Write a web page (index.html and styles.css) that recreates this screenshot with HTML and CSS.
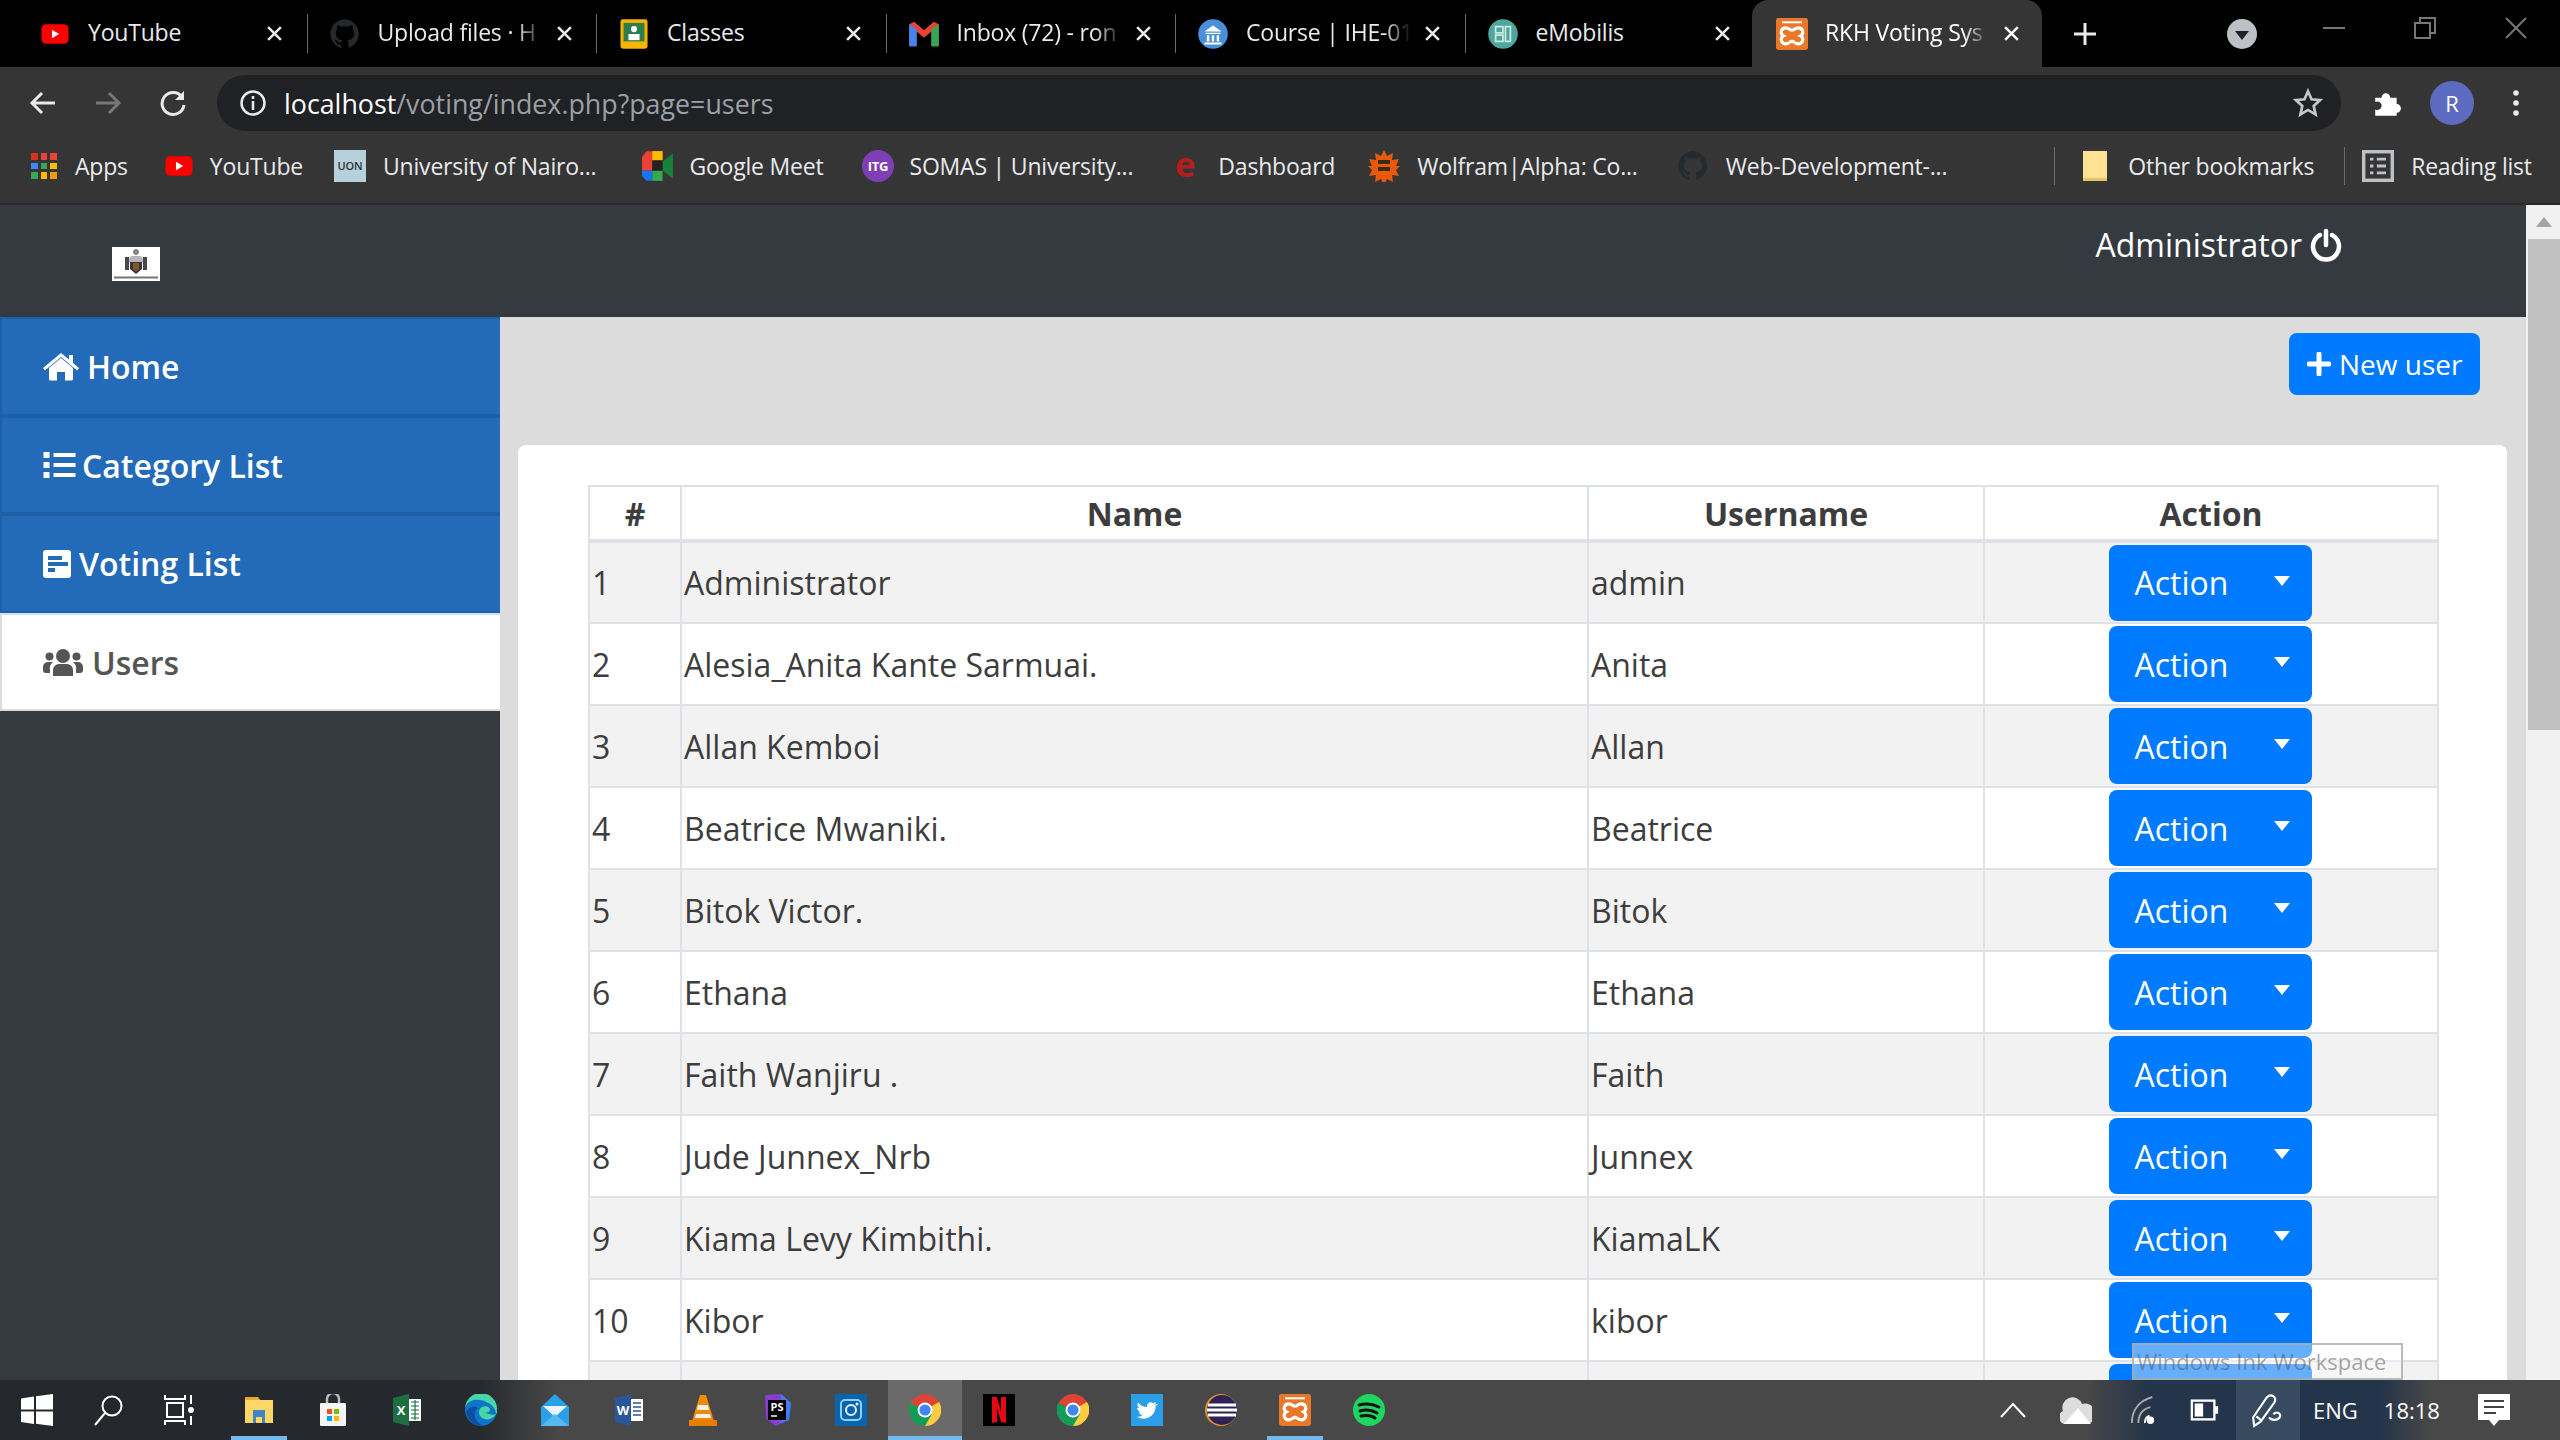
FILE: index.html
```html
<!DOCTYPE html>
<html lang="en">
<head>
  <meta charset="UTF-8">
  <meta name="viewport" content="width=device-width, initial-scale=1.0">
  <title>RKH Voting System</title>
  <link rel="stylesheet" href="styles.css">
</head>
<body>
  <svg class="defs" width="0" height="0">
    <symbol id="i-caret" viewBox="0 0 16 10"><path d="M0 0h16L8 10z" fill="currentColor"/></symbol>
    <symbol id="i-x" viewBox="0 0 16 16"><path d="M2 2l12 12M14 2L2 14" stroke="currentColor" stroke-width="2.4" fill="none"/></symbol>
    <symbol id="i-gh" viewBox="0 0 24 24"><path fill="#24292e" d="M12 1a11 11 0 0 0-3.5 21.4c.6.1.8-.2.8-.5v-2c-3 .7-3.700-1.400-3.700-1.400-.5-1.300-1.200-1.600-1.200-1.600-1-.7.100-.7.100-.7 1.100.1 1.700 1.100 1.700 1.100 1 1.700 2.600 1.200 3.200.9.100-.7.400-1.200.7-1.500-2.400-.3-5-1.200-5-5.400 0-1.200.4-2.200 1.100-2.900-.1-.3-.5-1.400.1-2.900 0 0 .9-.3 3 1.100a10 10 0 0 1 5.400 0c2.100-1.400 3-1.100 3-1.100.6 1.500.2 2.600.1 2.900.7.800 1.100 1.700 1.100 2.900 0 4.200-2.600 5.100-5 5.400.4.300.7 1 .7 2v3c0 .3.200.6.800.5A11 11 0 0 0 12 1z"/></symbol>
    <symbol id="i-yt" viewBox="0 0 26 26"><rect x="2" y="5" width="22" height="16" rx="4" fill="#f00"/><path d="M10.500 9.500l6 3.500-6 3.500z" fill="#fff"/></symbol>
    <symbol id="i-xampp" viewBox="0 0 26 26"><rect width="26" height="26" rx="2" fill="#e8792b"/><path d="M5 3.500h16" stroke="#fff" stroke-width="1.600"/><path d="M8 8c3 0 3 2 5 2s2-2 5-2c4 0 5 5 2 6.500 3 1.500 2 6.500-2 6.500-3 0-3-2-5-2s-2 2-5 2c-4 0-5-5-2-6.500C3 13 4 8 8 8z" fill="none" stroke="#fff" stroke-width="2.500"/></symbol>
    <symbol id="i-chrome" viewBox="0 0 32 32"><circle cx="16" cy="16" r="16" fill="#db4437"/><path d="M16 16L2 24a16 16 0 0 1-1-15z" fill="#0f9d58"/><path d="M16 16l14-8a16 16 0 0 1-14 24z" fill="#ffcd40"/><path d="M2 24a16 16 0 0 0 14 8l7-12-7-4z" fill="#0f9d58"/><circle cx="16" cy="16" r="7.500" fill="#fff"/><circle cx="16" cy="16" r="5.600" fill="#4285f4"/></symbol>
  </svg>

  <div class="tabstrip">
    <div class="tab">
      <svg class="fav"><use href="#i-yt"/></svg><span class="tab-title">YouTube</span><svg class="tab-x"><use href="#i-x"/></svg>
    </div>
    <div class="tab">
      <svg class="fav"><use href="#i-gh"/></svg><span class="tab-title fade">Upload files · H</span><svg class="tab-x"><use href="#i-x"/></svg>
    </div>
    <div class="tab">
      <svg class="fav" viewBox="0 0 26 26"><rect x="2" y="1" width="22" height="24" rx="2" fill="#f4b400"/><rect x="4.500" y="4" width="17" height="15" fill="#2e7d4f"/><circle cx="13" cy="9" r="2.500" fill="#fff"/><rect x="8.500" y="13" width="9" height="5" fill="#fff"/></svg><span class="tab-title">Classes</span><svg class="tab-x"><use href="#i-x"/></svg>
    </div>
    <div class="tab">
      <svg class="fav" viewBox="0 0 26 26"><path d="M1 23V5l4-2 8 7 8-7 4 2v18h-6V11l-6 5-6-5v12z" fill="#ea4335"/><path d="M1 23V5l6 4v14z" fill="#4285f4"/><path d="M25 23V5l-6 4v14z" fill="#34a853"/></svg><span class="tab-title fade">Inbox (72) - ron</span><svg class="tab-x"><use href="#i-x"/></svg>
    </div>
    <div class="tab">
      <svg class="fav" viewBox="0 0 26 26"><circle cx="13" cy="13" r="12" fill="#4a90d9"/><path d="M6 11l7-5 7 5zM7 12h12v1H7zM8 14h2v5H8zM12 14h2v5h-2zM16 14h2v5h-2zM6 20h14v1.500H6z" fill="#fff"/></svg><span class="tab-title fade">Course | IHE-01</span><svg class="tab-x"><use href="#i-x"/></svg>
    </div>
    <div class="tab">
      <svg class="fav" viewBox="0 0 26 26"><circle cx="13" cy="13" r="12" fill="#4ea79c"/><path d="M7 7h6v5H7zM15 7h4v12h-4zM7 14h6v5H7z" fill="none" stroke="#cfe9e4" stroke-width="1.400"/></svg><span class="tab-title">eMobilis</span><svg class="tab-x"><use href="#i-x"/></svg>
    </div>
    <div class="tab active">
      <svg class="fav"><use href="#i-xampp"/></svg><span class="tab-title fade">RKH Voting Sys</span><svg class="tab-x"><use href="#i-x"/></svg>
    </div>
    <svg class="new-tab" viewBox="0 0 24 24"><path d="M12 1v22M1 12h22" stroke="#e8eaed" stroke-width="3"/></svg>
    <svg class="tab-search" viewBox="0 0 30 30"><circle cx="15" cy="15" r="15" fill="#bdc1c6"/><path d="M8 12h14l-7 9z" fill="#202124"/></svg>
    <div class="win-btns">
      <svg viewBox="0 0 22 22"><path d="M0 11h22" stroke="#777" stroke-width="2"/></svg>
      <svg viewBox="0 0 22 22"><path d="M1 6h15v15H1zM6 6V1h15v15h-5" stroke="#777" stroke-width="2" fill="none"/></svg>
      <svg viewBox="0 0 22 22"><path d="M1 1l20 20M21 1L1 21" stroke="#777" stroke-width="2"/></svg>
    </div>
  </div>

  <div class="toolbar">
    <svg class="nav-ic" viewBox="0 0 28 28"><path d="M26 14H4M13 4L3 14l10 10" stroke="#e8eaed" stroke-width="3" fill="none"/></svg>
    <svg class="nav-ic" viewBox="0 0 28 28"><path d="M2 14h22M15 4l10 10-10 10" stroke="#777" stroke-width="3" fill="none"/></svg>
    <svg class="nav-ic" viewBox="0 0 28 28"><path d="M23 8a11 11 0 1 0 2 8" stroke="#e8eaed" stroke-width="3" fill="none"/><path d="M25 2v9h-9z" fill="#e8eaed"/></svg>
    <div class="omnibox">
      <svg class="info-ic" viewBox="0 0 28 28"><circle cx="14" cy="14" r="11.500" fill="none" stroke="#e8eaed" stroke-width="2.500"/><path d="M14 12v9M14 7v3" stroke="#e8eaed" stroke-width="2.500"/></svg>
      <span class="url"><b>localhost</b>/voting/index.php?page=users</span>
      <svg class="star-ic" viewBox="0 0 28 28"><path d="M14 3l3.300 7.500 8 .8-6 5.400 1.800 8L14 20.500 6.900 24.700l1.800-8-6-5.400 8-.8z" fill="none" stroke="#c4c7c5" stroke-width="2.500"/></svg>
    </div>
    <svg class="puzzle-ic" viewBox="0 0 28 28"><path d="M3 9h6a4 4 0 1 1 8 0h6v6a4 4 0 1 1 0 8v3H3v-6a4 4 0 1 0 0-7z" fill="#fff"/></svg>
    <span class="avatar">R</span>
    <svg class="menu-ic" viewBox="0 0 8 28"><circle cx="4" cy="4" r="2.800" fill="#e8eaed"/><circle cx="4" cy="14" r="2.800" fill="#e8eaed"/><circle cx="4" cy="24" r="2.800" fill="#e8eaed"/></svg>
  </div>

  <div class="bookmarks">
    <a class="bm bm-apps"><svg viewBox="0 0 26 26"><path d="M0 0h7v7H0z" fill="#d93025"/><path d="M10 0h6v7h-6zM19 0h7v7h-7z" fill="#ea4335"/><path d="M0 10h7v6H0z" fill="#4285f4"/><path d="M10 10h6v6h-6z" fill="#34a853"/><path d="M19 10h7v6h-7z" fill="#fbbc04"/><path d="M0 19h7v7H0z" fill="#34a853"/><path d="M10 19h6v7h-6z" fill="#fbbc04"/><path d="M19 19h7v7h-7z" fill="#f29900"/></svg>Apps</a>
    <a class="bm bm-yt"><svg><use href="#i-yt"/></svg>YouTube</a>
    <a class="bm bm-uon"><svg viewBox="0 0 32 32"><rect width="32" height="32" fill="#b6d0dc"/><text x="16" y="20" text-anchor="middle" class="uon-txt">UON</text></svg>University of Nairo...</a>
    <a class="bm bm-meet"><svg viewBox="0 0 28 28"><path d="M4 1h14v9H9v8H0V6z" fill="#ea4335"/><path d="M0 18h9v9H4l-4-4z" fill="#1a73e8"/><path d="M9 18h9v9H9z" fill="#34a853"/><path d="M18 1v8h-9V1z" fill="#fbbc04"/><path d="M18 10l9-7v22l-9-7z" fill="#188038"/><path d="M9 9h9v9H9z" fill="#222"/></svg>Google Meet</a>
    <a class="bm bm-itg"><svg viewBox="0 0 32 32"><circle cx="16" cy="16" r="16" fill="#7e3fb5"/><text x="16" y="21" text-anchor="middle" class="itg-txt">ITG</text></svg>SOMAS | University...</a>
    <a class="bm bm-e"><svg viewBox="0 0 28 28"><text x="14" y="24" text-anchor="middle" class="e-txt">e</text></svg>Dashboard</a>
    <a class="bm bm-wolf"><svg viewBox="0 0 32 32"><path d="M16 0l3 6 6-3-1 7 7-1-3 7 4 0-4 4 3 6-7-1 1 7-6-3-3 6-3-6-6 3 1-7-7 1 3-6-4-4 4 0-3-7 7 1-1-7 6 3z" fill="#e8590c"/><path d="M10 10h12v4H10zM10 17h12v4H10z" fill="#3a2a10"/></svg>Wolfram|Alpha: Co...</a>
    <a class="bm bm-gh"><svg><use href="#i-gh"/></svg>Web-Development-...</a>
    <span class="bm-sep sep-1"></span>
    <a class="bm bm-other"><svg viewBox="0 0 26 32"><path d="M1 1h24v30H1z" fill="#fde293"/><path d="M1 28h24v3H1z" fill="#e3c565"/></svg>Other bookmarks</a>
    <span class="bm-sep sep-2"></span>
    <a class="bm bm-read"><svg viewBox="0 0 28 28"><rect x="1.500" y="1.500" width="25" height="25" fill="none" stroke="#bdc1c6" stroke-width="3"/><path d="M7 8h3M13 8h8M7 14h3M13 14h8M7 20h3M13 20h8" stroke="#bdc1c6" stroke-width="2.500"/></svg>Reading list</a>
  </div>

  <div class="page">
    <aside class="sidebar">
      <div class="brand">
        <svg class="logo" viewBox="0 0 48 34">
          <rect width="48" height="34" fill="#fff"/>
          <circle cx="24" cy="5" r="3" fill="#8b8790"/>
          <path d="M19 9h10l2 3v3H17v-3z" fill="#b9b6bb"/>
          <path d="M13 10h4v13h-4zM31 10h4v13h-4z" fill="#4a4650"/>
          <path d="M18 15h12v7l-6 5-6-5z" fill="#3b3340"/>
          <path d="M21 16h6v6l-3 3-3-3z" fill="#7a5a28"/>
          <path d="M2 29.500h44v2H2z" fill="#77747a"/>
        </svg>
      </div>
      <nav class="menu">
        <a class="menu-item">
          <svg class="menu-ic-svg ic-home" viewBox="0 0 36 28"><path d="M18 5L6 15v11a1.500 1.500 0 0 0 1.500 1.500H14V19h8v8.500h6.500A1.500 1.500 0 0 0 30 26V15z" fill="currentColor"/><path d="M18 0L0 15l2 2.400L18 4l16 13.400 2-2.400-6-5V2h-4v4.600z" fill="currentColor"/></svg>Home</a>
        <a class="menu-item">
          <svg class="menu-ic-svg ic-list" viewBox="0 0 32 28"><path d="M0 1h6v6H0zM0 11h6v6H0zM0 21h6v6H0zM10 2h22v4H10zM10 12h22v4H10zM10 22h22v4H10z" fill="currentColor"/></svg>Category List</a>
        <a class="menu-item">
          <svg class="menu-ic-svg ic-poll" viewBox="0 0 28 28"><path fill-rule="evenodd" d="M3 0h22a3 3 0 0 1 3 3v22a3 3 0 0 1-3 3H3a3 3 0 0 1-3-3V3a3 3 0 0 1 3-3zM5 6v4h14V6zM5 12v4h20v-4h-20zM5 18v4h7v-4z" fill="currentColor"/></svg>Voting List</a>
        <a class="menu-item current">
          <svg class="menu-ic-svg ic-users" viewBox="0 0 40 28"><circle cx="20" cy="8" r="7" fill="currentColor"/><circle cx="6.500" cy="8.500" r="4" fill="currentColor"/><circle cx="33.500" cy="8.500" r="4" fill="currentColor"/><path d="M10 28v-6a6 6 0 0 1 6-6h8a6 6 0 0 1 6 6v6zM0 22v-3a5 5 0 0 1 5-5h5a8 8 0 0 0-3 8v3H3a3 3 0 0 1-3-3zM40 22v-3a5 5 0 0 0-5-5h-5a8 8 0 0 1 3 8v3h4a3 3 0 0 0 3-3z" fill="currentColor"/></svg>Users</a>
      </nav>
    </aside>

    <div class="body-col">
      <header class="topbar">
        <span class="admin">Administrator
          <svg class="power-ic" viewBox="0 0 32 32"><path d="M10 6a13 13 0 1 0 12 0" fill="none" stroke="currentColor" stroke-width="4.500" stroke-linecap="round"/><path d="M16 2v14" stroke="currentColor" stroke-width="4.500" stroke-linecap="round"/></svg>
        </span>
      </header>
      <main class="content">
        <div class="actions-row">
          <button class="btn btn-new"><svg class="plus-ic" viewBox="0 0 24 24"><path d="M12 2v20M2 12h20" stroke="currentColor" stroke-width="5" stroke-linecap="round"/></svg>New user</button>
        </div>
        <section class="card">
          <table class="users">
            <colgroup><col class="c-num"><col class="c-name"><col class="c-user"><col class="c-act"></colgroup>
            <thead>
              <tr><th>#</th><th>Name</th><th>Username</th><th>Action</th></tr>
            </thead>
            <tbody>
              <tr><td>1</td><td>Administrator</td><td>admin</td><td class="act"><button class="btn btn-act">Action<svg class="caret"><use href="#i-caret"/></svg></button></td></tr>
              <tr><td>2</td><td>Alesia_Anita Kante Sarmuai.</td><td>Anita</td><td class="act"><button class="btn btn-act">Action<svg class="caret"><use href="#i-caret"/></svg></button></td></tr>
              <tr><td>3</td><td>Allan Kemboi</td><td>Allan</td><td class="act"><button class="btn btn-act">Action<svg class="caret"><use href="#i-caret"/></svg></button></td></tr>
              <tr><td>4</td><td>Beatrice Mwaniki.</td><td>Beatrice</td><td class="act"><button class="btn btn-act">Action<svg class="caret"><use href="#i-caret"/></svg></button></td></tr>
              <tr><td>5</td><td>Bitok Victor.</td><td>Bitok</td><td class="act"><button class="btn btn-act">Action<svg class="caret"><use href="#i-caret"/></svg></button></td></tr>
              <tr><td>6</td><td>Ethana</td><td>Ethana</td><td class="act"><button class="btn btn-act">Action<svg class="caret"><use href="#i-caret"/></svg></button></td></tr>
              <tr><td>7</td><td>Faith Wanjiru .</td><td>Faith</td><td class="act"><button class="btn btn-act">Action<svg class="caret"><use href="#i-caret"/></svg></button></td></tr>
              <tr><td>8</td><td>Jude Junnex_Nrb</td><td>Junnex</td><td class="act"><button class="btn btn-act">Action<svg class="caret"><use href="#i-caret"/></svg></button></td></tr>
              <tr><td>9</td><td>Kiama Levy Kimbithi.</td><td>KiamaLK</td><td class="act"><button class="btn btn-act">Action<svg class="caret"><use href="#i-caret"/></svg></button></td></tr>
              <tr><td>10</td><td>Kibor</td><td>kibor</td><td class="act"><button class="btn btn-act">Action<svg class="caret"><use href="#i-caret"/></svg></button></td></tr>
              <tr><td></td><td></td><td></td><td class="act"><button class="btn btn-act">Action<svg class="caret"><use href="#i-caret"/></svg></button></td></tr>
            </tbody>
          </table>
        </section>
      </main>
    </div>

    <div class="scrollbar">
      <div class="scroll-up"><svg viewBox="0 0 16 10"><path d="M8 0l8 10H0z" fill="#a3a3a3"/></svg></div>
      <div class="scroll-thumb"></div>
    </div>
    <div class="ink-tip">Windows Ink Workspace</div>
  </div>

  <footer class="taskbar">
    <div class="task-cell"><svg viewBox="0 0 32 32"><path d="M0 4.500l13-2v13H0zM15 2.200L32 0v15.500H15zM0 17.500h13v12.500l-13-2zM15 17.500h17V32l-17-2.300z" fill="#fff"/></svg></div>
    <div class="task-cell"><svg viewBox="0 0 32 32"><circle cx="20" cy="12" r="9.500" fill="none" stroke="#fff" stroke-width="2"/><path d="M13 19L3 31" stroke="#fff" stroke-width="2"/></svg></div>
    <div class="task-cell"><svg viewBox="0 0 32 32"><path d="M1 1v4h20V1M3 9h16v14H3zM1 31v-4h20v4M27 1v9M27 22v9" fill="none" stroke="#fff" stroke-width="2"/><circle cx="27" cy="16" r="3" fill="#fff"/></svg></div>
    <div class="task-cell on"><svg viewBox="0 0 32 32"><path d="M2 3h13l3 4H2z" fill="#e9a825"/><path d="M2 6h28v23H2z" fill="#fcd768"/><path d="M10 16h12v13h-3v-6h-6v6h-3z" fill="#3f86c7"/></svg></div>
    <div class="task-cell"><svg viewBox="0 0 32 32"><path d="M10 9V5a6 6 0 0 1 12 0v4" fill="none" stroke="#bbb" stroke-width="2.500"/><rect x="3" y="9" width="26" height="23" rx="1" fill="#f5f5f5"/><path d="M10 15h5v5h-5z" fill="#f25022"/><path d="M17 15h5v5h-5z" fill="#7fba00"/><path d="M10 22h5v5h-5z" fill="#00a4ef"/><path d="M17 22h5v5h-5z" fill="#ffb900"/></svg></div>
    <div class="task-cell"><svg viewBox="0 0 32 32"><path d="M2 4l16-4v32L2 28z" fill="#1d6f42"/><path d="M18 5h12v22H18z" fill="#fff"/><path d="M20 8h8M20 12h8M20 16h8M20 20h8M20 24h8M24 6v20" stroke="#1d6f42" stroke-width="1.200"/><text x="10" y="21" text-anchor="middle" class="x-txt">X</text></svg></div>
    <div class="task-cell"><svg viewBox="0 0 32 32"><circle cx="16" cy="16" r="16" fill="#0c74c9"/><path d="M31 20a10 10 0 0 1-14 4c-4-3-4-9 0-11 4-2 8 0 8 3 0 2-3 3-5 2 4 3 9 4 12 1V16A16 16 0 0 0 0 14c2-7 9-9 15-8 8 1 16 7 16 14z" fill="#46d6a8"/><path d="M13 14c-5 3-5 11 2 16 1 1 3 2 5 2C9 33 2 26 1 18c3-5 8-7 12-4z" fill="#0b4f9e"/></svg></div>
    <div class="task-cell"><svg viewBox="0 0 32 32"><path d="M16 0l14 13v19H2V13z" fill="#2aa0e6"/><path d="M4 12h24L16 23z" fill="#e8f5fd"/><path d="M2 32l14-12 14 12z" fill="#56b9f2"/></svg></div>
    <div class="task-cell"><svg viewBox="0 0 32 32"><path d="M2 4l16-4v32L2 28z" fill="#2b579a"/><path d="M18 5h12v22H18z" fill="#fff"/><path d="M20 9h8M20 13h8M20 17h8M20 21h8" stroke="#2b579a" stroke-width="1.600"/><text x="10" y="21" text-anchor="middle" class="x-txt">W</text></svg></div>
    <div class="task-cell"><svg viewBox="0 0 32 32"><path d="M13 1h6l8 26H5z" fill="#f08a00"/><path d="M11 11h10l1 5H10zM9 20h14l1 4H8z" fill="#f2f2f2"/><path d="M2 26h28v6H2z" fill="#e87d00"/></svg></div>
    <div class="task-cell"><svg viewBox="0 0 32 32"><path d="M4 1l16-1 10 9-2 17-13 6-10-7z" fill="#8a3bd1"/><path d="M20 0l10 9-2 17-9 3z" fill="#3d7ef0"/><rect x="7" y="6" width="18" height="20" fill="#000"/><text x="16" y="17" text-anchor="middle" class="ps-txt">PS</text><path d="M10 22h6" stroke="#fff" stroke-width="1.500"/></svg></div>
    <div class="task-cell"><svg viewBox="0 0 32 32"><rect width="32" height="32" fill="#0a64ad"/><rect x="6" y="6" width="20" height="20" rx="4" fill="none" stroke="#8fd0f7" stroke-width="2"/><circle cx="16" cy="16" r="5" fill="none" stroke="#e5f5ff" stroke-width="2"/><circle cx="22" cy="10" r="1.500" fill="#e5f5ff"/></svg></div>
    <div class="task-cell hl on"><svg><use href="#i-chrome"/></svg></div>
    <div class="task-cell"><svg viewBox="0 0 32 32"><rect width="32" height="32" fill="#000"/><path d="M9 3h5l4 15V3h5v26l-5-1-4-14v14l-5 1z" fill="#e50914"/></svg></div>
    <div class="task-cell"><svg><use href="#i-chrome"/></svg></div>
    <div class="task-cell"><svg viewBox="0 0 32 32"><rect width="32" height="32" fill="#2a9ee6"/><path d="M26 10c-1 .5-2 .6-3 .7 1-.6 2-1.500 2-2.700-1 .6-2 1-3 1.200-2-2.200-6-.8-6 2.800v1C12 13 9 11 7 8.500c-1 2-.5 4 1 5.500-1 0-1.500-.2-2-.6 0 2 1.500 4 3.500 4.500-.6.2-1.200.2-1.800 0 .5 1.700 2.200 3 4 3-2 1.500-4 2-6 1.800 8 5 19 0 19-10.700 1-.6 1.600-1.300 2.300-2z" fill="#fff"/></svg></div>
    <div class="task-cell"><svg viewBox="0 0 32 32"><circle cx="16" cy="16" r="16" fill="#e8942e"/><circle cx="17" cy="16" r="15" fill="#2c2255"/><path d="M3 11h28M2 16h30M3 21h28" stroke="#fff" stroke-width="2.800"/></svg></div>
    <div class="task-cell on"><svg><use href="#i-xampp"/></svg></div>
    <div class="task-cell"><svg viewBox="0 0 32 32"><circle cx="16" cy="16" r="16" fill="#1ed760"/><path d="M6 11c7-2 14-1 20 2M7 17c6-2 12-1 17 2M8 22c5-1 10-1 14 2" fill="none" stroke="#111" stroke-width="3" stroke-linecap="round"/></svg></div>

    <div class="tray">
      <svg class="t-chev" viewBox="0 0 26 16"><path d="M1 15L13 2l12 13" fill="none" stroke="#fff" stroke-width="2"/></svg>
      <svg class="t-cloud" viewBox="0 0 32 32"><path d="M4 30a7 7 0 0 1-1-13 10 10 0 0 1 19-7 8 8 0 0 1 6 20z" fill="#ddd"/><path d="M4 30l14-16 13 16z" fill="#fff"/></svg>
      <svg class="t-wifi" viewBox="0 0 28 32"><path d="M2 30C2 16 10 6 24 2M9 30c0-9 5-15 13-17" fill="none" stroke="#aaa" stroke-width="2"/><path d="M16 30c0-4 2-7 5-8" fill="none" stroke="#fff" stroke-width="2"/><circle cx="22" cy="27" r="4" fill="#fff"/></svg>
      <svg class="t-batt" viewBox="0 0 32 32"><rect x="2" y="6" width="24" height="20" fill="none" stroke="#fff" stroke-width="2.500"/><rect x="5" y="9" width="9" height="14" fill="#fff"/><path d="M26 12h4v8h-4z" fill="#fff"/></svg>
      <div class="t-ink"><svg viewBox="0 0 32 32"><path d="M3 31l-1-8L15 4q3-3 6-1t1 6L9 27zM5 22l5 4M17 23c2 3 8 3 10 0 2-4-3-6-6-3" fill="none" stroke="#fff" stroke-width="2"/></svg></div>
      <span class="t-lang">ENG</span>
      <span class="t-time">18:18</span>
      <svg class="t-note" viewBox="0 0 32 32"><path d="M0 0h32v26H21l-5 6-5-6H0z" fill="#fff"/><path d="M6 7h20M6 13h20M6 19h12" stroke="#444" stroke-width="2.200"/></svg>
    </div>
  </footer>
</body>
</html>
```

FILE: styles.css
```css
* {
  box-sizing: border-box;
}
html, body {
  margin: 0;
  height: 1440px;
  overflow: hidden;
}
body {
  display: flex;
  flex-direction: column;
  font-family: 'Open Sans', 'Noto Sans', sans-serif;
  background: #343a40;
}
.defs {
  position: absolute;
}

/* chrome tabs */
.tabstrip {
  height: 67px;
  flex: none;
  background: #000;
  display: flex;
  align-items: center;
  padding-left: 18px;
  color: #e8eaed;
  font-size: 23px;
  letter-spacing: -0.2px;
}
.tab {
  width: 289.5px;
  height: 67px;
  flex: none;
  display: flex;
  align-items: center;
  padding-left: 21px;
  position: relative;
}
.tab::after {
  content: '';
  position: absolute;
  right: 0;
  top: 14px;
  bottom: 14px;
  width: 1px;
  background: #6a6a6a;
}
.tab:nth-child(6)::after,
.tab.active::after {
  display: none;
}
.tab.active {
  width: 290px;
  margin-left: -3px;
  padding-left: 24px;
  background: #353535;
  border-radius: 16px 16px 0 0;
  color: #fff;
}
.fav {
  width: 32px;
  height: 32px;
  flex: none;
  margin-right: 17px;
}
.tab-title {
  width: 165px;
  flex: none;
  margin-top: -3px;
  white-space: nowrap;
  overflow: hidden;
}
.tab-title.fade {
  -webkit-mask-image: linear-gradient(90deg, #000 84%, transparent);
  mask-image: linear-gradient(90deg, #000 84%, transparent);
}
.tab-x {
  width: 17px;
  height: 17px;
  margin-left: 13px;
  flex: none;
}
.new-tab {
  width: 24px;
  height: 24px;
  margin-left: 31px;
  flex: none;
}
.tab-search {
  width: 30px;
  height: 30px;
  margin-left: 130px;
  flex: none;
}
.win-btns {
  display: flex;
  margin-left: 66px;
  gap: 69px;
  margin-top: -12px;
}
.win-btns svg {
  width: 22px;
  height: 22px;
}

/* address bar */
.toolbar {
  height: 72px;
  flex: none;
  background: #353535;
  display: flex;
  align-items: center;
  padding: 0 0 0 29px;
}
.nav-ic {
  width: 28px;
  height: 28px;
  margin-right: 37px;
  flex: none;
}
.nav-ic:nth-child(3) {
  margin-right: 30px;
}
.omnibox {
  width: 2124px;
  height: 56px;
  background: #202124;
  border-radius: 28px;
  display: flex;
  align-items: center;
  padding: 0 24px 0 22px;
  flex: none;
}
.info-ic {
  width: 28px;
  height: 28px;
  margin-right: 17px;
}
.url {
  color: #9aa0a6;
  font-size: 26.8px;
  flex: 1;
}
.url b {
  color: #fff;
  font-weight: 400;
}
.star-ic {
  width: 30px;
  height: 30px;
  margin-right: -6px;
}
.puzzle-ic {
  width: 30px;
  height: 30px;
  margin-left: 31px;
  flex: none;
}
.avatar {
  width: 44px;
  height: 44px;
  margin-left: 28px;
  border-radius: 50%;
  background: #5c6bc0;
  color: #fff;
  font-size: 22px;
  display: flex;
  align-items: center;
  justify-content: center;
  flex: none;
}
.menu-ic {
  width: 8px;
  height: 28px;
  margin-left: 38px;
  flex: none;
}

/* bookmarks */
.bookmarks {
  height: 66px;
  flex: none;
  background: #353535;
  border-bottom: 2px solid #2a2a2a;
  display: flex;
  align-items: center;
  color: #e8eaed;
  font-size: 23px;
  letter-spacing: -0.2px;
  padding-bottom: 10px;
}
.bm {
  display: flex;
  align-items: center;
  white-space: nowrap;
  flex: none;
}
.bm svg {
  width: 32px;
  height: 32px;
  margin-right: 15px;
  flex: none;
}
.bm-apps { margin-left: 31px; }
.bm-apps svg {
  width: 26px;
  margin-right: 18px;
}
.bm-yt { margin-left: 35px; }
.bm-uon { margin-left: 31px; }
.bm-meet { margin-left: 46px; }
.bm-itg { margin-left: 39px; }
.bm-e { margin-left: 36px; }
.bm-wolf { margin-left: 33px; }
.bm-gh { margin-left: 39px; }
.bm-uon svg,
.bm-e svg,
.bm-wolf svg,
.bm-gh svg,
.bm-other svg,
.bm-read svg {
  margin-right: 17px;
}
.bm-sep {
  width: 1px;
  height: 38px;
  background: #6a6a6a;
  flex: none;
}
.sep-1 { margin-left: 107px; }
.bm-other { margin-left: 24px; }
.sep-2 { margin-left: 30px; }
.bm-read { margin-left: 17px; }
.uon-txt {
  font: 600 11px 'Open Sans', sans-serif;
  fill: #333;
}
.itg-txt {
  font: 700 13px 'Open Sans', sans-serif;
  fill: #fff;
}
.e-txt {
  font: 700 30px 'Open Sans', sans-serif;
  fill: #b71c1c;
}

/* page */
.page {
  flex: 1;
  min-height: 0;
  display: flex;
  position: relative;
  overflow: hidden;
}
.sidebar {
  width: 500px;
  flex: none;
  background: #343a40;
}
.brand {
  height: 112px;
  display: flex;
  align-items: center;
  padding: 6px 0 0 112px;
}
.logo {
  width: 48px;
  height: 34px;
}
.menu-item {
  height: 98.5px;
  display: flex;
  align-items: center;
  padding: 1px 0 0 41px;
  background: #236ab9;
  color: #fff;
  font-size: 32px;
  font-weight: 600;
  border: 2px solid #1f5fa8;
  border-right-width: 0;
}
.menu-item.current {
  background: #fff;
  color: #555;
  border-color: #dcdcdc;
  border-top-color: #cfe0f2;
}
.menu-ic-svg {
  height: 28px;
  margin-right: 8px;
  flex: none;
}
.ic-home { width: 36px; }
.ic-list { width: 33px; margin-right: 6px; }
.ic-poll { width: 28px; }
.ic-users { width: 40px; margin-right: 9px; }

.body-col {
  flex: 1;
  min-width: 0;
  display: flex;
  flex-direction: column;
}
.topbar {
  height: 112px;
  flex: none;
  background: #343a40;
  display: flex;
  justify-content: flex-end;
  padding: 18px 184px 0 0;
  color: #fff;
  font-size: 32px;
}
.admin {
  display: flex;
  align-items: flex-start;
  gap: 8px;
}
.power-ic {
  width: 32px;
  height: 34px;
  margin-top: 5px;
}
.content {
  flex: 1;
  background: #dcdcdc;
  padding: 16px 19px 0 18px;
  overflow: hidden;
}
.actions-row {
  display: flex;
  justify-content: flex-end;
  padding-right: 27px;
  margin-bottom: 50px;
}
.btn {
  border: 0;
  background: #007bff;
  color: #fff;
  font-family: inherit;
  border-radius: 8px;
  display: flex;
  align-items: center;
  white-space: nowrap;
}
.btn-new {
  width: 191px;
  height: 62px;
  padding: 0 0 0 18px;
  font-size: 28px;
}
.plus-ic {
  width: 24px;
  height: 24px;
  margin-right: 8px;
  flex: none;
}
.card {
  background: #fff;
  border-radius: 8px 8px 0 0;
  padding: 40px 0 0 70px;
  min-height: 1000px;
}
.users {
  width: 1849px;
  table-layout: fixed;
  border-collapse: collapse;
  color: #3d3d3d;
  font-size: 32px;
}
.c-num { width: 92px; }
.c-name { width: 907px; }
.c-user { width: 396px; }
.c-act { width: 454px; }
.users th, .users td {
  border: 2px solid #dee2e6;
  padding: 0 2px;
  white-space: nowrap;
}
.users th {
  height: 55px;
  font-size: 32px;
  font-weight: 700;
  text-align: center;
  border-bottom-width: 4px;
}
.users td {
  height: 82px;
}
.users tbody tr:nth-child(odd) {
  background: #f2f2f2;
}
.users td.act {
  padding: 0 2px 0 0;
}
.btn-act {
  width: 203px;
  height: 76px;
  margin: 0 auto;
  padding: 0 0 0 26px;
  font-size: 32px;
  position: relative;
}
.caret {
  position: absolute;
  right: 21px;
  top: 31px;
  width: 18px;
  height: 10px;
}

/* scrollbar + ink tooltip */
.scrollbar {
  width: 34px;
  flex: none;
  background: #f1f1f1;
  padding-left: 2px;
}
.scroll-up {
  height: 34px;
  display: flex;
  align-items: center;
  justify-content: center;
}
.scroll-up svg {
  width: 16px;
  height: 10px;
}
.scroll-thumb {
  height: 491px;
  background: #c1c1c1;
}
.ink-tip {
  position: absolute;
  left: 2132px;
  top: 1138px;
  width: 271px;
  height: 37px;
  background: rgba(255, 255, 255, 0.4);
  border: 2px solid rgba(170, 170, 170, 0.8);
  color: rgba(90, 90, 90, 0.55);
  font-size: 22px;
  line-height: 33px;
  padding-left: 3px;
  white-space: nowrap;
  overflow: hidden;
}

/* windows taskbar */
.taskbar {
  height: 60px;
  flex: none;
  display: flex;
  align-items: stretch;
  background: linear-gradient(90deg, #24282c 0, #26292d 480px, #484848 560px, #484848 100%);
  position: relative;
}
.task-cell {
  width: 74px;
  flex: none;
  display: flex;
  align-items: center;
  justify-content: center;
  position: relative;
}
.task-cell:nth-child(2) {
  padding-right: 6px;
}
.task-cell:nth-child(3) {
  padding-right: 10px;
}
.task-cell svg {
  width: 32px;
  height: 32px;
}
.task-cell.hl {
  background: #6a6a6a;
}
.task-cell.on::after {
  content: '';
  position: absolute;
  left: 9px;
  right: 9px;
  bottom: 0;
  height: 4px;
  background: #76b9ed;
}
.task-cell.hl::after {
  left: 0;
  right: 0;
}
.x-txt {
  font: 700 13px 'Open Sans', sans-serif;
  fill: #fff;
}
.ps-txt {
  font: 700 11px 'Open Sans', sans-serif;
  fill: #fff;
}
.tray {
  position: absolute;
  right: 0;
  top: 0;
  bottom: 0;
  width: 560px;
  display: flex;
  align-items: center;
  color: #fff;
  background: linear-gradient(90deg, #484848 85px, #24344a 150px, #24344a 380px, #484848 430px);
}
.t-chev {
  width: 26px;
  height: 16px;
  flex: none;
}
.t-cloud {
  width: 32px;
  height: 32px;
  margin-left: 34px;
  flex: none;
}
.t-wifi {
  width: 26px;
  height: 32px;
  margin-left: 38px;
  flex: none;
}
.t-batt {
  width: 30px;
  height: 30px;
  margin-left: 34px;
  flex: none;
}
.t-ink {
  width: 64px;
  height: 60px;
  margin-left: 16px;
  background: #384a60;
  display: flex;
  align-items: center;
  justify-content: center;
  flex: none;
}
.t-ink svg {
  width: 34px;
  height: 38px;
}
.t-lang {
  font-size: 22px;
  margin-left: 13px;
  flex: none;
}
.t-time {
  font-size: 22px;
  margin-left: 26px;
  flex: none;
}
.t-note {
  width: 32px;
  height: 32px;
  margin-left: 38px;
  flex: none;
}
```
